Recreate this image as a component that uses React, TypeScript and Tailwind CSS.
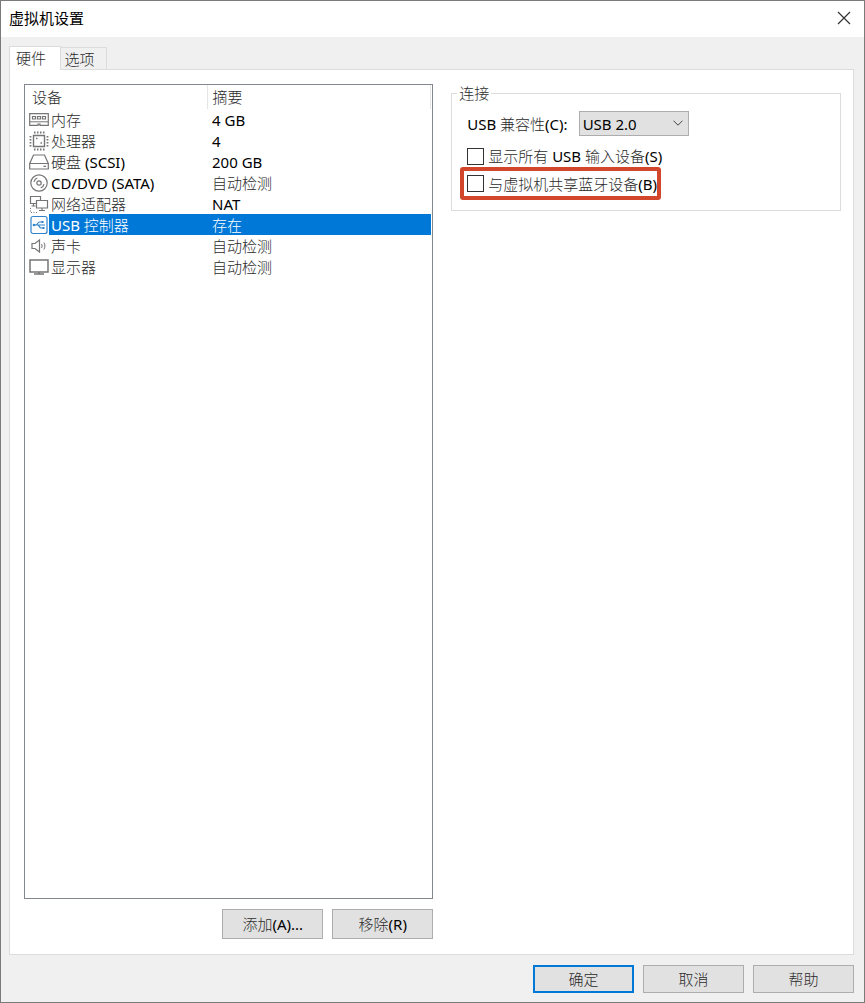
import React, { useState } from 'react'
import clsx from 'clsx'

type Device = {
  id: string
  name: string
  summary: string
  icon: React.ReactNode
}

const DEVICES: Device[] = [
  {
    id: 'memory',
    name: '内存',
    summary: '4 GB',
    icon: (
      <>
        <path d="M.7 3.700h18.600v11.600h-8.300v-1.200H9v1.200H.7z" />
        <path d="M3.500 6.500h3v2.500h-3zM8.500 6.500h3v2.500h-3zM13.500 6.500h3v2.500h-3z" />
        <path d="M1 11.800h18" strokeWidth="1" />
      </>
    ),
  },
  {
    id: 'cpu',
    name: '处理器',
    summary: '4',
    icon: (
      <>
        <path d="M4.500 4.500h11v11h-11z" strokeWidth="1.400" />
        <path d="M5 1.500h11M5 18.500h11M1.500 5v11M18.500 5v11" strokeWidth="1.800" strokeDasharray="1.500 1.500" />
        <path d="M7 7.500h1.500M11.500 12h1.500" strokeWidth="1.500" />
      </>
    ),
  },
  {
    id: 'disk',
    name: '硬盘 (SCSI)',
    summary: '200 GB',
    icon: (
      <>
        <path d="M4.500 3h11l3.800 8.500V17H.7v-5.500z" />
        <path d="M.7 11.500h18.600M14.500 14.300H17" />
      </>
    ),
  },
  {
    id: 'cd',
    name: 'CD/DVD (SATA)',
    summary: '自动检测',
    icon: (
      <>
        <circle cx="10" cy="10" r="8.200" />
        <circle cx="10" cy="10" r="2.200" />
        <path d="M5 8.800A5.300 5.300 0 0 1 8.300 5M15 11.200a5.300 5.300 0 0 1-3.300 3.800" />
      </>
    ),
  },
  {
    id: 'network',
    name: '网络适配器',
    summary: 'NAT',
    icon: (
      <>
        <path d="M7 9.500H1.500v-7h10v3.500M4.500 9.500v2.500M2.500 12h4" />
        <path d="M7.500 6.500h11v7.500h-11zM13 14v2.500M10 16.500h6" />
        <path d="M1.500 14v4.500h8" strokeWidth="1" strokeDasharray="1 1.500" />
      </>
    ),
  },
  {
    id: 'usb',
    name: 'USB 控制器',
    summary: '存在',
    icon: (
      <g stroke="#2f84cc">
        <rect x="2" y="1.500" width="16" height="17" rx="2" />
        <path d="M5 10h11M6.500 10c2.200 0 2-3 4-3h2.500M8.500 10c2 0 1.800 3 3.500 3h2" />
        <circle cx="5" cy="10" r="1.300" fill="#2f84cc" stroke="none" />
        <path d="M12.500 6H14.500v2h-2zM13.500 12h2v2h-2z" fill="#2f84cc" stroke="none" />
      </g>
    ),
  },
  {
    id: 'sound',
    name: '声卡',
    summary: '自动检测',
    icon: (
      <>
        <path d="M3 7.500h3L10.500 4v12L6 12.500H3z" />
        <path d="M12.500 8c.8 1.200.8 2.800 0 4M14.800 6.500c1.500 2 1.500 5 0 7" strokeWidth="1" />
      </>
    ),
  },
  {
    id: 'display',
    name: '显示器',
    summary: '自动检测',
    icon: (
      <>
        <path d="M1 3h18v12H1z" strokeWidth="1.500" />
        <path d="M5 17h10M10 15v2" strokeWidth="1.500" />
      </>
    ),
  },
]

const BUTTON = 'border border-[#adadad] bg-[#e1e1e1] text-center'

// Chinese runs are drawn lighter than the latin ones
function Mixed({ text, inverted }: { text: string; inverted?: boolean }) {
  return (
    <>
      {text.split(/([\u4e00-\u9fff]+)/).map((part, i) => (
        <span key={i} className={clsx(i % 2 && 'font-light', inverted ? 'text-white' : i % 2 ? 'text-[#2b2b2b]' : 'text-black')}>
          {part}
        </span>
      ))}
    </>
  )
}

function DeviceList() {
  const [selected, setSelected] = useState('usb')

  return (
    <div className="flex-1 border border-[#828790] bg-white pr-px">
      <table className="w-full table-fixed border-collapse text-left leading-5">
        <colgroup>
          <col className="w-6" />
          <col className="w-[158px]" />
          <col />
        </colgroup>
        <thead>
          <tr className="h-6">
            <th colSpan={2} className="border-r border-[#e5e5e5] p-0 pl-[7px] font-normal"><Mixed text="设备" /></th>
            <th className="border-r border-[#e5e5e5] p-0 pl-[5px] font-normal"><Mixed text="摘要" /></th>
          </tr>
        </thead>
        <tbody>
          {DEVICES.map((d) => {
            const active = d.id === selected
            return (
              <tr key={d.id} className="h-[21px] cursor-default" aria-selected={active} onClick={() => setSelected(d.id)}>
                <td className="p-0 pl-1">
                  <svg viewBox="0 0 20 20" className="block size-5" fill="none" stroke="#757575" strokeWidth="1.200" aria-hidden="true">
                    {d.icon}
                  </svg>
                </td>
                <td className={clsx('p-0 pl-0.5 whitespace-nowrap', active && 'bg-[#0078d7]')}>
                  <Mixed text={d.name} inverted={active} />
                </td>
                <td className={clsx('p-0 pl-[5px] whitespace-nowrap', active && 'bg-[#0078d7]')}>
                  <Mixed text={d.summary} inverted={active} />
                </td>
              </tr>
            )
          })}
        </tbody>
      </table>
    </div>
  )
}

function ConnectionGroup() {
  const box = 'mr-1 size-[17px] shrink-0 appearance-none border border-[#333] bg-white checked:bg-[#0078d7]'

  return (
    <fieldset className="min-w-0 border border-[#dcdcdc] pr-3 pb-2.5 pl-[15px]">
      <legend className="-ml-[10px] px-0.5 leading-[18px]"><Mixed text="连接" /></legend>
      <div className="flex items-center gap-[11px] pt-[9px]">
        <label htmlFor="usb-compat"><Mixed text="USB 兼容性(C):" /></label>
        <div className="relative">
          <select id="usb-compat" defaultValue="2.0" className="block h-[25px] w-[110px] appearance-none border border-[#adadad] bg-[#e1e1e1] pl-[3px] leading-5 text-black">
            <option value="1.1">USB 1.1</option>
            <option value="2.0">USB 2.0</option>
            <option value="3.1">USB 3.1</option>
          </select>
          <svg viewBox="0 0 10 6" className="pointer-events-none absolute top-[9px] right-1.5 h-1.5 w-2.5" fill="none" stroke="#444" aria-hidden="true">
            <path d="M.5.7 5 5.200 9.500.7" />
          </svg>
        </div>
      </div>
      <label className="mt-[9px] flex h-[22px] items-center whitespace-nowrap">
        <input type="checkbox" className={box} />
        <span><Mixed text="显示所有 USB 输入设备(S)" /></span>
      </label>
      <label className="-ml-[7px] flex h-[33px] w-fit items-center rounded-[3px] border-4 border-[#d2472c] pl-[3px] whitespace-nowrap">
        <input type="checkbox" className={box} />
        <span><Mixed text="与虚拟机共享蓝牙设备(B)" /></span>
      </label>
    </fieldset>
  )
}

export default function App() {
  return (
    <div className="flex min-h-screen flex-col border border-[#7a7a7a] bg-[#f0f0f0] font-['Noto_Sans','Noto_Sans_CJK_SC',sans-serif] text-[15px] leading-5 select-none">
      <header className="flex h-9 items-center justify-between bg-white pr-[13px] pb-0.5 pl-2">
        <h1 className="text-black">虚拟机设置</h1>
        <button type="button" aria-label="关闭">
          <svg viewBox="0 0 14 14" className="block size-3.5" fill="none" stroke="#333" strokeWidth="1.200" aria-hidden="true">
            <path d="M1 1l12 12M13 1L1 13" />
          </svg>
        </button>
      </header>

      <main className="flex flex-1 flex-col pt-[9px] pr-[10px] pb-[9px] pl-2">
        <div role="tablist" className="flex items-end">
          <button type="button" role="tab" aria-selected="true" className="z-10 -mb-px h-6 w-[52px] border border-b-0 border-[#dcdcdc] bg-white pr-2 pb-0.5">
            <Mixed text="硬件" />
          </button>
          <button type="button" role="tab" aria-selected="false" className="h-[22px] w-[46px] border border-b-0 border-l-0 border-[#dcdcdc] pr-2">
            <Mixed text="选项" />
          </button>
        </div>

        <section role="tabpanel" className="grid flex-1 grid-cols-[21fr_20fr] gap-[18px] border border-[#dcdcdc] bg-white pt-3.5 pr-3 pb-[15px] pl-3.5">
          <div className="flex flex-col gap-2.5">
            <DeviceList />
            <div className="flex justify-end gap-[9px]">
              <button type="button" className={clsx(BUTTON, 'h-[30px] w-[101px]')}><Mixed text="添加(A)..." /></button>
              <button type="button" className={clsx(BUTTON, 'h-[30px] w-[101px]')}><Mixed text="移除(R)" /></button>
            </div>
          </div>
          <div>
            <ConnectionGroup />
          </div>
        </section>

        <footer className="flex justify-end gap-[9px] pt-2.5">
          <button type="button" className="h-7 w-[101px] border-2 border-[#0078d7] bg-[#e1e1e1] text-center"><Mixed text="确定" /></button>
          <button type="button" className={clsx(BUTTON, 'h-7 w-[101px]')}><Mixed text="取消" /></button>
          <button type="button" className={clsx(BUTTON, 'h-7 w-[101px]')}><Mixed text="帮助" /></button>
        </footer>
      </main>
    </div>
  )
}
